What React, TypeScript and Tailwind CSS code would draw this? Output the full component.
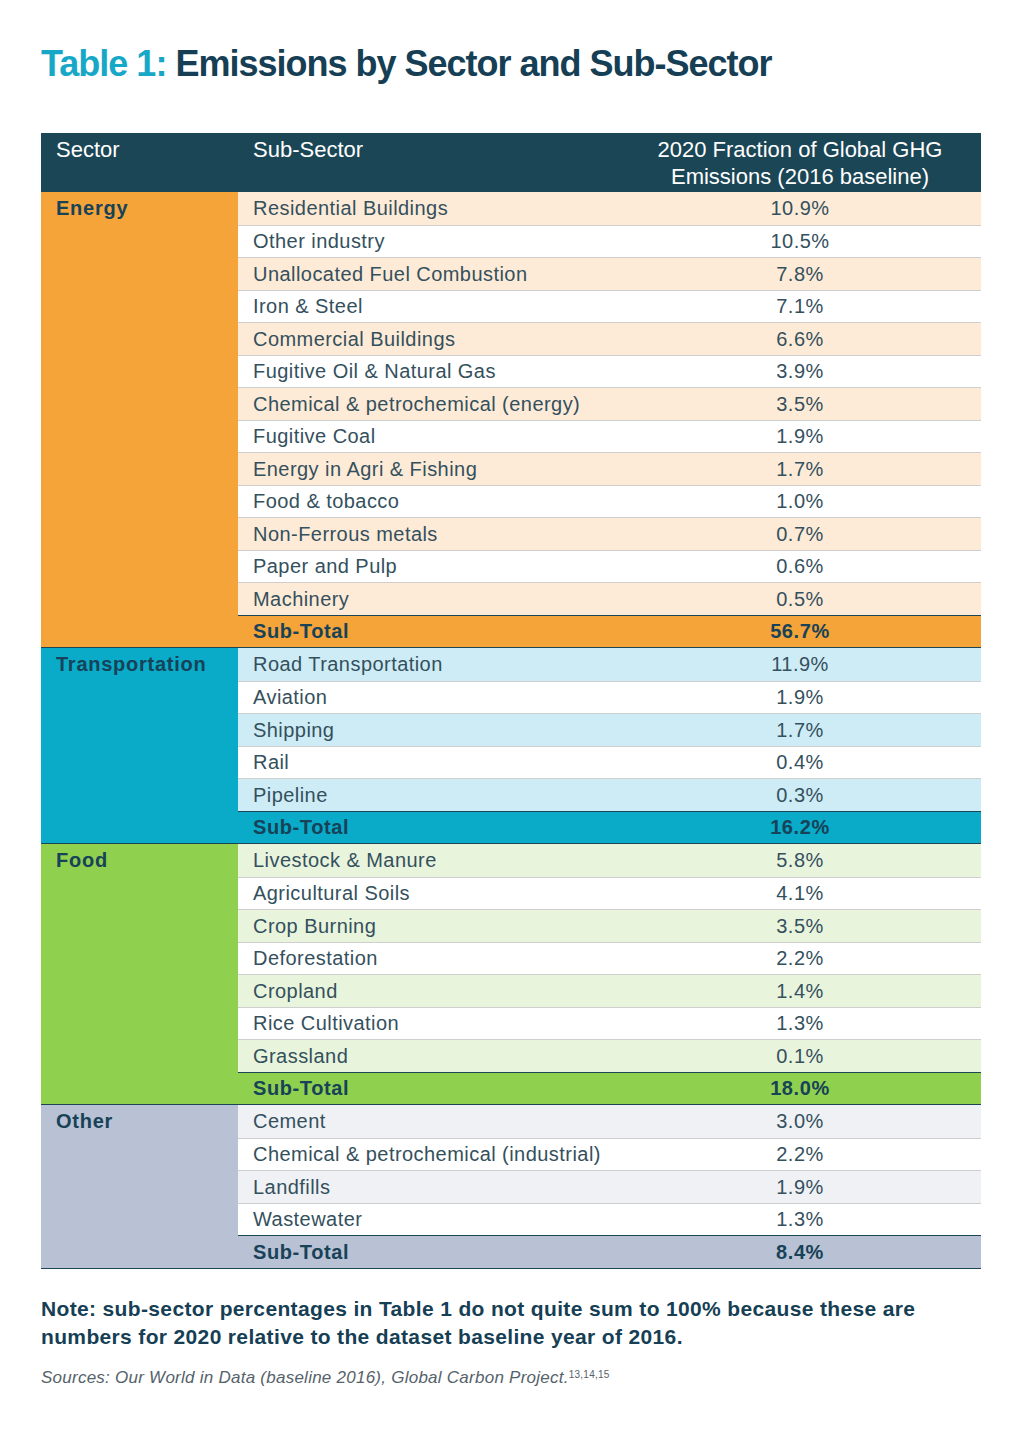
import React from "react";

type Group = {
  name: string;
  main: string;
  light: string;
  rows: [string, string][];
  total: string;
};

const groups: Group[] = [
  {
    name: "Energy",
    main: "bg-[#f5a43a]",
    light: "bg-[#fdebd7]",
    rows: [
      ["Residential Buildings", "10.9%"],
      ["Other industry", "10.5%"],
      ["Unallocated Fuel Combustion", "7.8%"],
      ["Iron & Steel", "7.1%"],
      ["Commercial Buildings", "6.6%"],
      ["Fugitive Oil & Natural Gas", "3.9%"],
      ["Chemical & petrochemical (energy)", "3.5%"],
      ["Fugitive Coal", "1.9%"],
      ["Energy in Agri & Fishing", "1.7%"],
      ["Food & tobacco", "1.0%"],
      ["Non-Ferrous metals", "0.7%"],
      ["Paper and Pulp", "0.6%"],
      ["Machinery", "0.5%"],
    ],
    total: "56.7%",
  },
  {
    name: "Transportation",
    main: "bg-[#0aaac9]",
    light: "bg-[#ceecf5]",
    rows: [
      ["Road Transportation", "11.9%"],
      ["Aviation", "1.9%"],
      ["Shipping", "1.7%"],
      ["Rail", "0.4%"],
      ["Pipeline", "0.3%"],
    ],
    total: "16.2%",
  },
  {
    name: "Food",
    main: "bg-[#8fd04f]",
    light: "bg-[#e9f4dd]",
    rows: [
      ["Livestock & Manure", "5.8%"],
      ["Agricultural Soils", "4.1%"],
      ["Crop Burning", "3.5%"],
      ["Deforestation", "2.2%"],
      ["Cropland", "1.4%"],
      ["Rice Cultivation", "1.3%"],
      ["Grassland", "0.1%"],
    ],
    total: "18.0%",
  },
  {
    name: "Other",
    main: "bg-[#b9c1d4]",
    light: "bg-[#eff1f5]",
    rows: [
      ["Cement", "3.0%"],
      ["Chemical & petrochemical (industrial)", "2.2%"],
      ["Landfills", "1.9%"],
      ["Wastewater", "1.3%"],
    ],
    total: "8.4%",
  },
];

export default function App() {
  return (
    <div
      className="w-[1024px] h-[1448px] bg-white text-[#1d3f4d]"
      style={{ fontFamily: '"Liberation Sans", Arial, sans-serif' }}
    >
      <div className="pl-[41px] pr-[43px] pt-[42px]">
        <h1 className="text-[36px] leading-[44px] font-bold tracking-[-1px] text-[#163f55]">
          <span className="text-[#17a8c8]">Table 1:</span> Emissions by Sector and Sub-Sector
        </h1>

        <div className="mt-[47px]">
          <div className="flex h-[59px] bg-[#1b4656] text-white text-[22px] leading-[27px]">
            <div className="w-[197px] pl-[15px] pt-[3px]">Sector</div>
            <div className="flex-1 pl-[15px] pt-[3px]">Sub-Sector</div>
            <div className="w-[362px] text-center pt-[3px]">
              2020 Fraction of Global GHG
              <br />
              Emissions (2016 baseline)
            </div>
          </div>

          {groups.map((g) => (
            <div key={g.name} className={`flex border-b-[1.5px] border-[#1b4656] ${g.main}`}>
              <div className="w-[197px] pl-[15px] h-[32.5px] flex items-center text-[20px] font-bold tracking-[0.75px] text-[#174257]">
                {g.name}
              </div>
              <div className="flex-1 flex flex-col">
                {g.rows.map(([label, val], i) => (
                  <div
                    key={label}
                    className={`flex h-[32.5px] items-center text-[20px] tracking-[0.45px] text-[#34505d] ${
                      i % 2 === 0 ? g.light : "bg-white"
                    } ${i > 0 ? "border-t border-[#cfcfcf]" : ""}`}
                  >
                    <div className="flex-1 pl-[15px]">{label}</div>
                    <div className="w-[362px] text-center">{val}</div>
                  </div>
                ))}
                <div className="flex h-[32.5px] items-center text-[20px] font-bold tracking-[0.6px] text-[#174257] border-t-[1.5px] border-[#1b4656]">
                  <div className="flex-1 pl-[15px]">Sub-Total</div>
                  <div className="w-[362px] text-center">{g.total}</div>
                </div>
              </div>
            </div>
          ))}
        </div>

        <p className="mt-[26px] text-[21px] leading-[28px] font-bold tracking-[0.35px] text-[#163f55]">
          Note: sub-sector percentages in Table 1 do not quite sum to 100% because these are
          <br />
          numbers for 2020 relative to the dataset baseline year of 2016.
        </p>
        <p className="mt-[14px] text-[17px] italic tracking-[0.25px] text-[#55626a]">
          Sources: Our World in Data (baseline 2016), Global Carbon Project.
          <sup className="text-[10px] not-italic">13,14,15</sup>
        </p>
      </div>
    </div>
  );
}
